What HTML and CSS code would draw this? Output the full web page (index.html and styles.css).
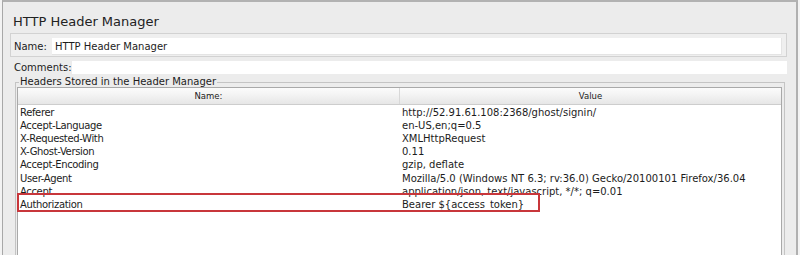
FILE: index.html
```html
<!DOCTYPE html>
<html lang="en">

<head>
    <meta charset="UTF-8">
    <title>HTTP Header Manager</title>
    <link rel="stylesheet" href="styles.css">
</head>

<body>
    <div class="window">
        <h1 class="title">HTTP Header Manager</h1>

        <div class="name-panel">
            <span class="label name-label">Name:</span>
            <div class="field name-field">HTTP Header Manager</div>
        </div>

        <div class="comments-row">
            <span class="label comments-label">Comments:</span>
            <div class="field comments-field"></div>
        </div>

        <fieldset class="group">
            <legend>Headers Stored in the Header Manager</legend>
            <div class="table">
                <div class="thead">
                    <div class="th">Name:</div>
                    <div class="th">Value</div>
                </div>
                <div class="tbody">
                    <div class="row"><div class="cell">Referer</div><div class="cell value">http://52.91.61.108:2368/ghost/signin/</div></div>
                    <div class="row"><div class="cell">Accept-Language</div><div class="cell value">en-US,en;q=0.5</div></div>
                    <div class="row"><div class="cell">X-Requested-With</div><div class="cell value">XMLHttpRequest</div></div>
                    <div class="row"><div class="cell">X-Ghost-Version</div><div class="cell value">0.11</div></div>
                    <div class="row"><div class="cell">Accept-Encoding</div><div class="cell value">gzip, deflate</div></div>
                    <div class="row"><div class="cell">User-Agent</div><div class="cell value">Mozilla/5.0 (Windows NT 6.3; rv:36.0) Gecko/20100101 Firefox/36.04</div></div>
                    <div class="row"><div class="cell">Accept</div><div class="cell value">application/json, text/javascript, */*; q=0.01</div></div>
                    <div class="row"><div class="cell">Authorization</div><div class="cell value">Bearer ${access_token}</div></div>
                </div>
                <!-- annotation box drawn over the last row -->
                <div class="highlight"></div>
            </div>
        </fieldset>
    </div>
</body>

</html>
```

FILE: styles.css
```css
* {
    margin: 0;
    padding: 0;
    box-sizing: border-box;
}

html,
body {
    height: 100%;
    overflow: hidden;
}

body {
    font-family: 'DejaVu Sans', Verdana, sans-serif;
    font-size: 10px;
    color: #1c1c1c;
    background: #f3f3f3;
    padding: 0 2px 0 2px;
}

.window {
    background: #ececec;
    border-top: 2px solid #b2b2b2;
    border-left: 1px solid #a8a8a8;
    border-right: 2px solid #b0b0b0;
    height: 300px;
    display: flex;
    flex-direction: column;
}

.title {
    font-size: 13px;
    font-weight: normal;
    line-height: 16px;
    color: #222;
    margin: 12px 0 0 10px;
}

.name-panel {
    display: flex;
    align-items: center;
    margin: 3px 9px 0 7px;
    height: 24px;
    padding: 4px 4px 1px 3px;
    border: 1px solid #d2d2d2;
    background: #efefef;
}

.label {
    flex: none;
    line-height: 12px;
}

.name-label {
    width: 38px;
}

.field {
    flex: 1;
    background: #fff;
}

.name-field {
    height: 17px;
    line-height: 17px;
    padding-left: 3px;
    border-right: 1px solid #e4e4e4;
    border-bottom: 1px solid #e4e4e4;
}

.comments-row {
    display: flex;
    align-items: center;
    margin: 4px 9px 0 7px;
    padding-left: 4px;
}

.comments-label {
    width: 58px;
}

.comments-field {
    height: 13px;
}

.group {
    margin: 2px 11px 0 12px;
    border: 1px solid #c4c4c4;
    border-bottom: none;
    padding: 0 2px 0 0;
    min-width: 0;
    flex: 1;
}

.group legend {
    margin-left: 3px;
    padding: 0 1px;
    line-height: 12px;
    font-size: 10px;
}

.table {
    position: relative;
    margin-left: 1px;
    margin-top: -1px;
    height: 200px;
    background: #fff;
    border: 1px solid #a9a9a9;
    border-bottom: none;
}

.thead {
    display: grid;
    grid-template-columns: 381px 1fr;
    height: 17px;
    background: linear-gradient(#fbfbfb, #f4f4f4 40%, #e6e6e6);
    border-bottom: 1px solid #cdcdcd;
}

.th {
    font-size: 8.5px;
    line-height: 16px;
    text-align: center;
    color: #222;
}

.th+.th {
    border-left: 1px solid #d8d8d8;
}

.tbody {
    padding-top: 1px;
}

.row {
    display: grid;
    grid-template-columns: 381px 1fr;
    height: 13px;
    line-height: 13px;
    white-space: nowrap;
}

.row:nth-child(n+4) {
    margin-top: 0.2px;
}

.cell {
    padding-left: 2px;
    letter-spacing: -0.35px;
}

.cell.value {
    padding-left: 3px;
    letter-spacing: 0;
}

.highlight {
    position: absolute;
    left: -1px;
    top: 105px;
    width: 523px;
    height: 19px;
    border: 2px solid #c8363b;
}
```
